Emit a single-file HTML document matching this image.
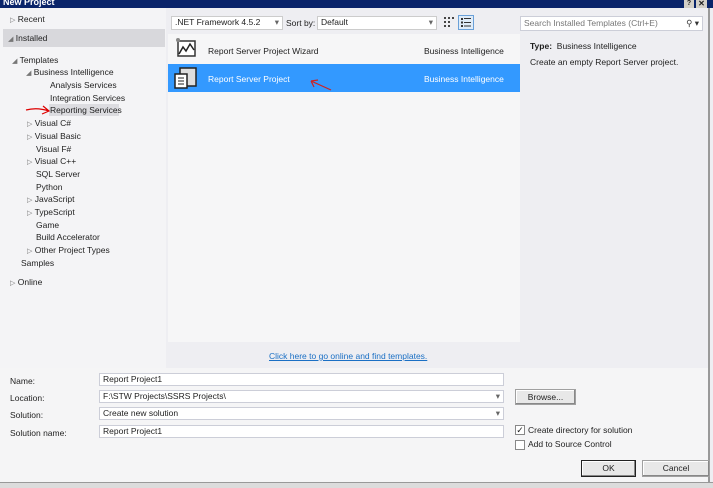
<!DOCTYPE html>
<html><head><style>
*{margin:0;padding:0;box-sizing:border-box}
body{width:713px;height:488px;overflow:hidden;background:#eeeef2;font-family:"Liberation Sans",Tahoma,sans-serif;font-size:8.5px;color:#1e1e1e;position:relative}
.a{position:absolute;white-space:nowrap}
.tb{left:0;top:0;width:713px;height:8px;background:#0a246a}
.inp{position:absolute;background:#fff;border:1px solid #ccced8;height:13px;padding-left:3px;line-height:11px}
.btn{position:absolute;background:#e8e8e8;border:1px solid #a0a0a0;text-align:center;line-height:14px;box-shadow:inset -1px -1px #888,inset 1px 1px #fff}
.tri{color:#777;font-size:7px}
.cb{position:absolute;width:10px;height:10px;border:1px solid #888;background:#fff}
</style></head><body>
<div class="a tb"><span style="color:#fff;font-weight:bold;font-size:9px;position:absolute;left:3px;top:-3px">New Project</span>
<span style="position:absolute;right:19px;top:0;width:10px;height:8px;background:#d4d0c8;font-size:7px;line-height:8px;text-align:center;font-weight:bold">?</span>
<span style="position:absolute;right:6px;top:0;width:11px;height:8px;background:#d4d0c8;font-size:8px;line-height:8px;text-align:center;font-weight:bold">✕</span></div>
<div class="a" style="left:708px;top:8px;width:2px;height:478px;background:#999"></div>
<!-- left pane -->
<div class="a" style="left:0;top:8px;width:166px;height:360px;background:#f4f4f6"></div>
<div class="a" style="left:3px;top:29px;width:162px;height:18px;background:#d8d8dc"></div>
<div class="a" style="left:10px;top:14px"><span class="tri">▷</span> Recent</div>
<div class="a" style="left:8px;top:33px"><span class="tri">◢</span> Installed</div>
<div class="a" style="left:12px;top:55px"><span class="tri">◢</span> Templates</div>
<div class="a" style="left:26px;top:67px"><span class="tri">◢</span> Business Intelligence</div>
<div class="a" style="left:50px;top:80px">Analysis Services</div>
<div class="a" style="left:50px;top:93px">Integration Services</div>
<div class="a" style="left:49px;top:104px;width:70px;height:12px;background:#dcdce0"></div>
<div class="a" style="left:50px;top:105px">Reporting Services</div>
<svg class="a" style="left:25px;top:103px" width="26" height="12"><path d="M1 7 Q12 4 24 8 M18 3 L24 8 L17 11" stroke="#d00" stroke-width="1.2" fill="none"/></svg>
<div class="a" style="left:27px;top:118px"><span class="tri">▷</span> Visual C#</div>
<div class="a" style="left:27px;top:131px"><span class="tri">▷</span> Visual Basic</div>
<div class="a" style="left:36px;top:144px">Visual F#</div>
<div class="a" style="left:27px;top:156px"><span class="tri">▷</span> Visual C++</div>
<div class="a" style="left:36px;top:169px">SQL Server</div>
<div class="a" style="left:36px;top:182px">Python</div>
<div class="a" style="left:27px;top:194px"><span class="tri">▷</span> JavaScript</div>
<div class="a" style="left:27px;top:207px"><span class="tri">▷</span> TypeScript</div>
<div class="a" style="left:36px;top:220px">Game</div>
<div class="a" style="left:36px;top:232px">Build Accelerator</div>
<div class="a" style="left:27px;top:245px"><span class="tri">▷</span> Other Project Types</div>
<div class="a" style="left:21px;top:258px">Samples</div>
<div class="a" style="left:10px;top:277px"><span class="tri">▷</span> Online</div>
<!-- toolbar -->
<div class="inp" style="left:171px;top:16px;width:112px;height:14px;border-color:#ccc">.NET Framework 4.5.2<span style="position:absolute;right:3px;color:#666">▾</span></div>
<div class="a" style="left:286px;top:18px">Sort by:</div>
<div class="inp" style="left:317px;top:16px;width:120px;height:14px;border-color:#ccc">Default<span style="position:absolute;right:3px;color:#666">▾</span></div>
<svg class="a" style="left:444px;top:17px" width="10" height="10"><g fill="#444"><rect x="0" y="0" width="2" height="2"/><rect x="4" y="0" width="2" height="2"/><rect x="0" y="4" width="2" height="2"/><rect x="4" y="4" width="2" height="2"/><rect x="0" y="8" width="2" height="2"/><rect x="4" y="8" width="2" height="2"/><rect x="8" y="0" width="2" height="2"/></g></svg>
<div class="a" style="left:458px;top:15px;width:16px;height:15px;border:1px solid #6aa0d8;background:#e0ecf8"></div>
<svg class="a" style="left:461px;top:18px" width="10" height="9"><g fill="#333"><rect x="0" y="0" width="2" height="2"/><rect x="3" y="0" width="7" height="1"/><rect x="0" y="3.5" width="2" height="2"/><rect x="3" y="4" width="7" height="1"/><rect x="0" y="7" width="2" height="2"/><rect x="3" y="7.5" width="7" height="1"/></g></svg>
<div class="inp" style="left:520px;top:16px;width:183px;height:15px;color:#777;line-height:12px">Search Installed Templates (Ctrl+E)<span style="position:absolute;right:3px;color:#333">⚲ ▾</span></div>
<!-- list -->
<div class="a" style="left:168px;top:34px;width:352px;height:308px;background:#f6f6f7"></div>
<div class="a" style="left:168px;top:64px;width:352px;height:28px;background:#3399ff"></div>
<svg class="a" style="left:175px;top:37px" width="22" height="22"><rect x="3" y="4" width="17" height="15" fill="#fff" stroke="#333" stroke-width="1.5"/><path d="M4 17 L8 10 L11 14 L15 7 L19 13" stroke="#222" stroke-width="1.5" fill="none"/><circle cx="3" cy="3" r="2" fill="#888"/></svg>
<div class="a" style="left:208px;top:46px">Report Server Project Wizard</div>
<div class="a" style="left:424px;top:46px">Business Intelligence</div>
<svg class="a" style="left:174px;top:66px" width="24" height="24"><rect x="6" y="2" width="16" height="18" fill="#ddd" stroke="#222" stroke-width="1.5"/><rect x="1" y="8" width="12" height="14" fill="#fff" stroke="#222" stroke-width="1.5"/><path d="M4 12h6M4 15h6M4 18h6" stroke="#222"/></svg>
<div class="a" style="left:208px;top:74px;color:#fff">Report Server Project</div>
<div class="a" style="left:424px;top:74px;color:#fff">Business Intelligence</div>
<svg class="a" style="left:309px;top:78px" width="24" height="14"><path d="M2 3 L22 12 M2 3 L9 2 M2 3 L5 9" stroke="#c22" stroke-width="1.2" fill="none"/></svg>
<div class="a" style="left:269px;top:351px;color:#1a6fc4;text-decoration:underline">Click here to go online and find templates.</div>
<!-- right -->
<div class="a" style="left:530px;top:41px"><b>Type:</b>&nbsp; Business Intelligence</div>
<div class="a" style="left:530px;top:57px">Create an empty Report Server project.</div>
<!-- bottom -->
<div class="a" style="left:0;top:368px;width:708px;height:114px;background:#f5f5f6"></div>
<div class="a" style="left:0;top:482px;width:713px;height:6px;background:#dcdcdc;border-top:1px solid #999"></div>
<div class="a" style="left:10px;top:376px">Name:</div>
<div class="inp" style="left:99px;top:373px;width:405px">Report Project1</div>
<div class="a" style="left:10px;top:393px">Location:</div>
<div class="inp" style="left:99px;top:390px;width:405px">F:\STW Projects\SSRS Projects\<span style="position:absolute;right:3px;color:#666">▾</span></div>
<div class="a" style="left:10px;top:410px">Solution:</div>
<div class="inp" style="left:99px;top:407px;width:405px">Create new solution<span style="position:absolute;right:3px;color:#666">▾</span></div>
<div class="a" style="left:10px;top:428px">Solution name:</div>
<div class="inp" style="left:99px;top:425px;width:405px">Report Project1</div>
<div class="btn" style="left:515px;top:389px;width:61px;height:16px">Browse...</div>
<div class="cb" style="left:515px;top:425px;font-size:9px;line-height:8px;text-align:center">✓</div>
<div class="a" style="left:528px;top:425px">Create directory for solution</div>
<div class="cb" style="left:515px;top:440px"></div>
<div class="a" style="left:528px;top:439px">Add to Source Control</div>
<div class="btn" style="left:581px;top:460px;width:55px;height:17px;border:1px solid #222;line-height:15px">OK</div>
<div class="btn" style="left:642px;top:460px;width:68px;height:17px;line-height:15px">Cancel</div>
</body></html>
